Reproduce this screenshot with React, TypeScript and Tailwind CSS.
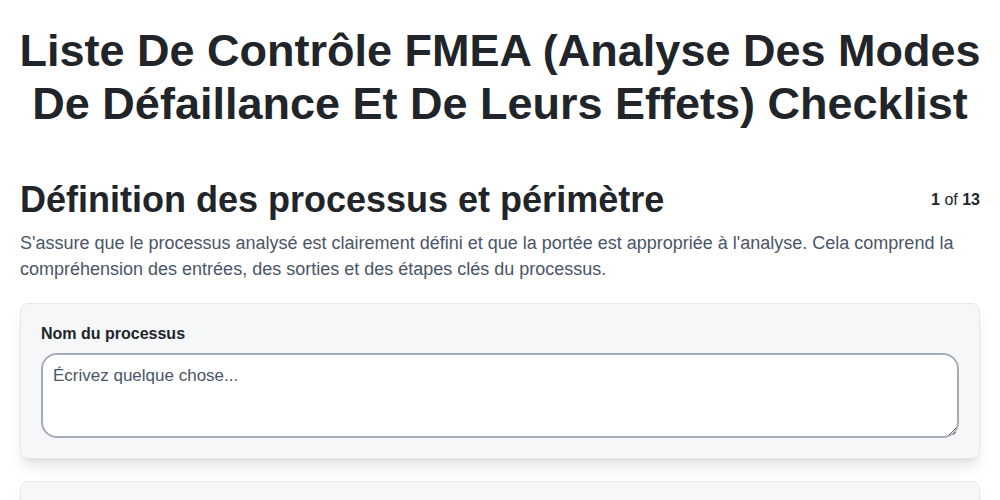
export default function App() {
  return (
    <div className="min-h-screen bg-white pb-10 font-['Liberation_Sans',Arial,sans-serif] text-[#212529]">
      <h1 className="mt-6 px-3 text-center text-[45px] font-bold leading-[53px]">
        Liste De Contrôle FMEA (Analyse Des Modes De Défaillance Et De Leurs Effets) Checklist
      </h1>

      <section className="mt-12 px-5">
        <div className="flex items-center justify-between gap-4">
          <h2 className="text-[36px] font-bold leading-[1.2]">Définition des processus et périmètre</h2>
          <span className="text-base">
            <b>1</b> of <b>13</b>
          </span>
        </div>
        <p className="mt-[9px] text-lg leading-[26px] text-[#4a5568]">
          S'assure que le processus analysé est clairement défini et que la portée est appropriée à l'analyse. Cela
          comprend la compréhension des entrées, des sorties et des étapes clés du processus.
        </p>

        <div className="mt-[21px] flex flex-col gap-[22px]">
          <div className="rounded-lg border border-[#e6e8ec] bg-[#f6f7f9] p-5 shadow-lg">
            <label className="block text-base font-bold leading-[1.2]">Nom du processus</label>
            <textarea
              placeholder="Écrivez quelque chose..."
              className="mt-2.5 block h-[85px] w-full rounded-2xl border-2 border-[#a5adb6] bg-white px-2.5 py-2 text-[17px] leading-normal text-[#212529] placeholder:text-[#4a5568] focus:outline-none"
            />
          </div>
          <div className="rounded-lg border border-[#e6e8ec] bg-[#f6f7f9] p-5 shadow-lg">
            <label className="block text-base font-bold leading-[1.2]">Portée de l'analyse</label>
            <textarea
              placeholder="Écrivez quelque chose..."
              className="mt-2.5 block h-[85px] w-full rounded-2xl border-2 border-[#a5adb6] bg-white px-2.5 py-2 text-[17px] leading-normal text-[#212529] placeholder:text-[#4a5568] focus:outline-none"
            />
          </div>
        </div>
      </section>
    </div>
  );
}
